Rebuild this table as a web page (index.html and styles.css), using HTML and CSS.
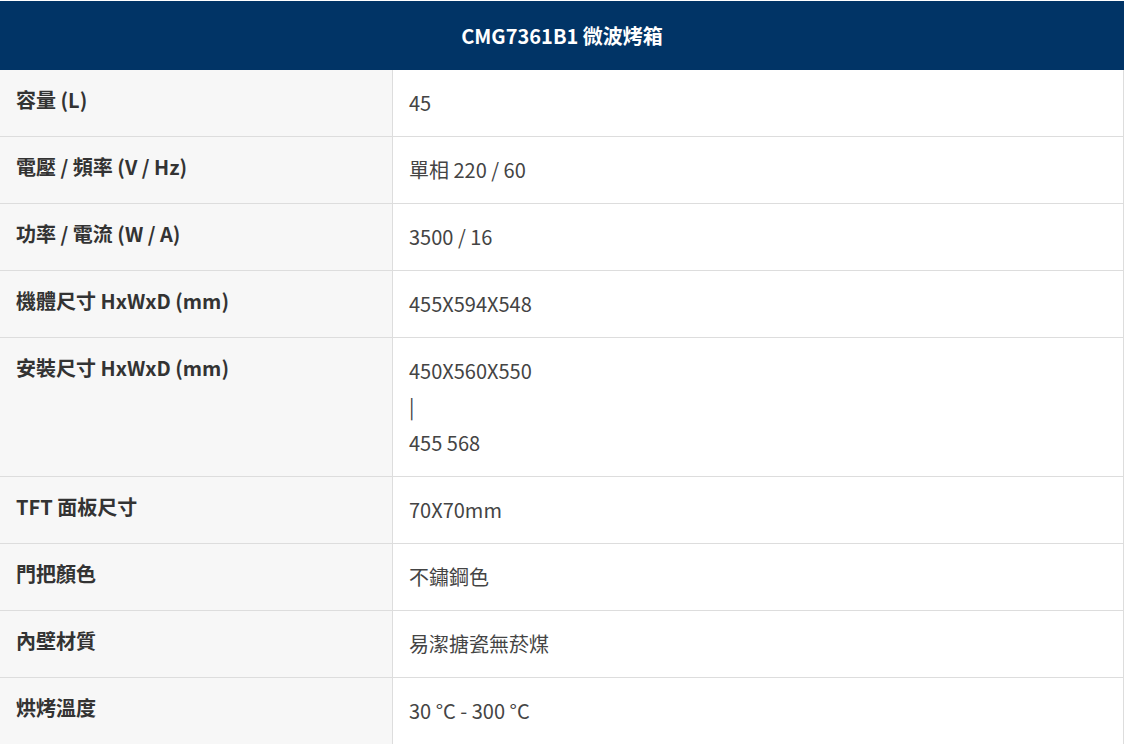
FILE: index.html
```html
<!DOCTYPE html>
<html lang="zh-Hant">
<head>
<meta charset="utf-8">
<title>CMG7361B1 微波烤箱</title>
<link rel="stylesheet" href="styles.css">
</head>
<body>
<div class="spec">
  <div class="spec-head">CMG7361B1 微波烤箱</div>
  <div class="row"><div class="label">容量 (L)</div><div class="value">45</div></div>
  <div class="row"><div class="label">電壓 / 頻率 (V / Hz)</div><div class="value">單相 220 / 60</div></div>
  <div class="row"><div class="label">功率 / 電流 (W / A)</div><div class="value">3500 / 16</div></div>
  <div class="row"><div class="label">機體尺寸 HxWxD (mm)</div><div class="value">455X594X548</div></div>
  <div class="row"><div class="label">安裝尺寸 HxWxD (mm)</div><div class="value">450X560X550<br>|<br>455 568</div></div>
  <div class="row"><div class="label">TFT 面板尺寸</div><div class="value">70X70mm</div></div>
  <div class="row"><div class="label">門把顏色</div><div class="value">不鏽鋼色</div></div>
  <div class="row"><div class="label">內壁材質</div><div class="value">易潔搪瓷無菸煤</div></div>
  <div class="row"><div class="label">烘烤溫度</div><div class="value">30 °C - 300 °C</div></div>
</div>
</body>
</html>
```
FILE: styles.css
```css
html, body {
  margin: 0;
  padding: 0;
  background: #ffffff;
}
body {
  font-family: "Noto Sans CJK TC", "Noto Sans", sans-serif;
  font-size: 20px;
}
.spec {
  width: 1124px;
  margin-top: 1px;
}
.spec-head {
  height: 69px;
  background: #013466;
  color: #ffffff;
  font-weight: 700;
  font-size: 20px;
  display: flex;
  align-items: center;
  justify-content: center;
}
.row {
  display: grid;
  grid-template-columns: 393px 1fr;
  border-bottom: 1px solid #dddddd;
  border-right: 1px solid #dddddd;
}
.label {
  background: #f7f7f7;
  border-right: 1px solid #dddddd;
  padding: 15px 16px;
  line-height: 30px;
  font-weight: 700;
  color: #333333;
}
.value {
  padding: 15px 16px;
  line-height: 36px;
  color: #444444;
}
```
